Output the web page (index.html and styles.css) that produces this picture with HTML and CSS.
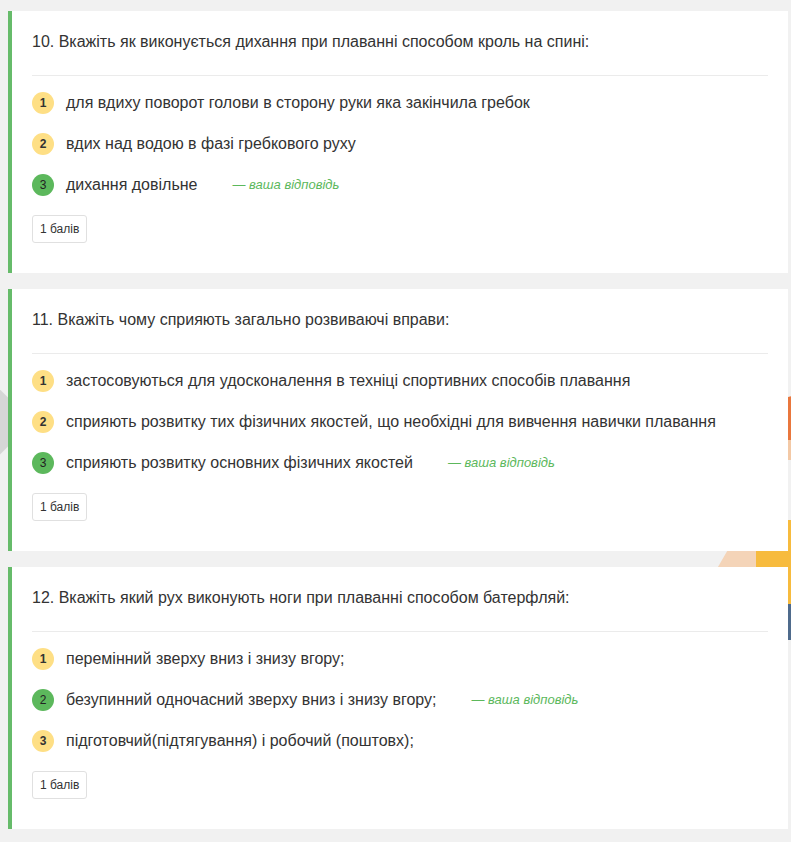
FILE: index.html
```html
<!DOCTYPE html>
<html lang="uk">
<head>
<meta charset="utf-8">
<link rel="stylesheet" href="styles.css">
</head>
<body>
<div class="decor">
  <div class="shape gray-tri"></div>
  <div class="shape orange"></div>
  <div class="shape peach-top"></div>
  <div class="shape peach"></div>
  <div class="shape yellow"></div>
  <div class="shape blue"></div>
</div>
<main class="list">
  <section class="card">
    <h2 class="title">10. Вкажіть як виконується дихання при плаванні способом кроль на спині:</h2>
    <ul class="answers">
      <li class="answer"><span class="num">1</span><span class="text">для вдиху поворот голови в сторону руки яка закінчила гребок</span></li>
      <li class="answer"><span class="num">2</span><span class="text">вдих над водою в фазі гребкового руху</span></li>
      <li class="answer"><span class="num num-ok">3</span><span class="text">дихання довільне</span><span class="mine">— ваша відповідь</span></li>
    </ul>
    <div class="points">1 балів</div>
  </section>
  <section class="card">
    <h2 class="title">11. Вкажіть чому сприяють загально розвиваючі вправи:</h2>
    <ul class="answers">
      <li class="answer"><span class="num">1</span><span class="text">застосовуються для удосконалення в техніці спортивних способів плавання</span></li>
      <li class="answer"><span class="num">2</span><span class="text">сприяють розвитку тих фізичних якостей, що необхідні для вивчення навички плавання</span></li>
      <li class="answer"><span class="num num-ok">3</span><span class="text">сприяють розвитку основних фізичних якостей</span><span class="mine">— ваша відповідь</span></li>
    </ul>
    <div class="points">1 балів</div>
  </section>
  <section class="card">
    <h2 class="title">12. Вкажіть який рух виконують ноги при плаванні способом батерфляй:</h2>
    <ul class="answers">
      <li class="answer"><span class="num">1</span><span class="text">перемінний зверху вниз і знизу вгору;</span></li>
      <li class="answer"><span class="num num-ok">2</span><span class="text">безупинний одночасний зверху вниз і знизу вгору;</span><span class="mine">— ваша відповідь</span></li>
      <li class="answer"><span class="num">3</span><span class="text">підготовчий(підтягування) і робочий (поштовх);</span></li>
    </ul>
    <div class="points">1 балів</div>
  </section>
</main>
</body>
</html>
```

FILE: styles.css
```css
* { box-sizing: border-box; }

html, body {
  margin: 0;
  padding: 0;
  background: #f1f1f1;
  font-family: "Liberation Sans", Arial, sans-serif;
  color: #333;
  overflow: hidden;
}

body {
  position: relative;
  width: 791px;
  height: 842px;
}

.decor {
  position: absolute;
  inset: 0;
  z-index: 0;
  overflow: hidden;
}

.shape { position: absolute; }

.gray-tri {
  left: -40px;
  top: 392px;
  width: 60px;
  height: 60px;
  background: #d6d6d6;
  transform: rotate(45deg);
}

.orange {
  left: 776px;
  top: 396px;
  width: 40px;
  height: 48px;
  background: #e9773d;
  border-radius: 18px 0 0 20px;
}

.peach-top {
  left: 782px;
  top: 440px;
  width: 20px;
  height: 20px;
  background: #f3c9a6;
}

.peach {
  left: 722px;
  top: 540px;
  width: 60px;
  height: 40px;
  background: #f4d4b8;
  border-radius: 0 24px 0 0;
  transform: skewX(-30deg);
}

.yellow {
  left: 756px;
  top: 520px;
  width: 50px;
  height: 92px;
  background: #f7bb3e;
  border-radius: 30px 0 0 0;
}

.blue {
  left: 786px;
  top: 604px;
  width: 10px;
  height: 36px;
  background: #4f6b8c;
}

.list {
  position: relative;
  z-index: 1;
  display: flex;
  flex-direction: column;
  gap: 16px;
  padding: 11px 3px 0 8px;
}

.card {
  background: #fff;
  border-left: 4px solid #66bb6a;
  padding: 21px 20px 30px 20px;
}

.title {
  margin: 0;
  font-size: 16px;
  font-weight: normal;
  line-height: 20px;
  padding-bottom: 23px;
  border-bottom: 1px solid #ebebeb;
  color: #333;
}

.answers {
  list-style: none;
  margin: 6px 0 0 0;
  padding: 0;
}

.answer {
  display: flex;
  align-items: center;
  height: 41px;
  font-size: 16px;
}

.num {
  flex: none;
  width: 22px;
  height: 22px;
  border-radius: 50%;
  background: #fedf85;
  display: flex;
  align-items: center;
  justify-content: center;
  font-size: 12px;
  font-weight: bold;
  color: #333;
  margin-right: 12px;
}

.num-ok {
  background: #5cb85c;
  font-weight: normal;
  color: #222;
}

.mine {
  margin-left: 35px;
  font-size: 13px;
  font-style: italic;
  color: #5cb85c;
}

.points {
  display: inline-flex;
  align-items: center;
  height: 28px;
  margin-top: 10px;
  padding: 0 7px;
  border: 1px solid #e0e0e0;
  border-radius: 3px;
  font-size: 12px;
  color: #333;
}
```
